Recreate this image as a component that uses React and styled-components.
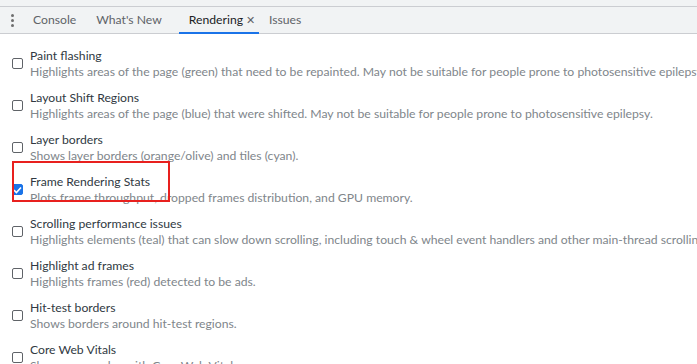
import React from "react";
import styled, { createGlobalStyle } from "styled-components";

const Global = createGlobalStyle`
  html, body { margin: 0; padding: 0; background: #fff; }
  body { font-family: Lato, "Segoe UI", sans-serif; font-size: 12.2px; color: #202124; }
`;

const Page = styled.div`
  width: 697px;
  height: 364px;
  overflow: hidden;
  display: flex;
  flex-direction: column;
`;

const TopStrip = styled.div`
  flex: none;
  height: 6px;
  background: #f1f3f4;
  border-bottom: 1px solid #cbcdd1;
`;

const TabBar = styled.div`
  flex: none;
  height: 26px;
  background: #f1f3f4;
  border-bottom: 1px solid #cbcdd1;
  display: flex;
  align-items: stretch;
  padding-left: 11px;
`;

const MenuDots = styled.div`
  width: 3px;
  display: flex;
  flex-direction: column;
  justify-content: center;
  align-items: center;
  gap: 2px;
  margin-right: 9px;
  span {
    width: 3px;
    height: 3px;
    border-radius: 50%;
    background: #6e6e6e;
  }
`;

const Tab = styled.div`
  display: flex;
  align-items: center;
  gap: 3px;
  padding: ${(p) => (p.$active ? "0 4px 0 10px" : "0 10px")};
  margin-left: ${(p) => (p.$active ? "7px" : "0")};
  color: ${(p) => (p.$active ? "#202124" : "#5f6368")};
  border-bottom: 2px solid ${(p) => (p.$active ? "#1a73e8" : "transparent")};
  margin-bottom: -1px;
  white-space: nowrap;
`;

const Close = styled.span`
  font-size: 11px;
  color: #5f6368;
  line-height: 1;
`;

const List = styled.div`
  display: flex;
  flex-direction: column;
  gap: 10px;
  padding: 14px 0 0 12px;
`;

const Item = styled.div`
  position: relative;
  display: flex;
  align-items: flex-start;
  gap: 7px;
  white-space: nowrap;
`;

const Box = styled.span`
  flex: none;
  box-sizing: border-box;
  width: 11px;
  height: 11px;
  margin-top: 10px;
  border: 1px solid ${(p) => (p.$checked ? "#1a73e8" : "#5f6368")};
  border-radius: 2px;
  background: ${(p) => (p.$checked ? "#1a73e8" : "#fff")};
  display: flex;
  align-items: center;
  justify-content: center;
`;

const Texts = styled.div`
  display: flex;
  flex-direction: column;
`;

const Title = styled.div`
  line-height: 16px;
  color: #303942;
`;

const Desc = styled.div`
  line-height: 16px;
  color: #80868b;
`;

const Highlight = styled.div`
  position: absolute;
  left: 0;
  top: -13px;
  box-sizing: border-box;
  width: 158px;
  height: 41px;
  border: 2px solid #e8201e;
  pointer-events: none;
`;

const items = [
  ["Paint flashing", "Highlights areas of the page (green) that need to be repainted. May not be suitable for people prone to photosensitive epilepsy."],
  ["Layout Shift Regions", "Highlights areas of the page (blue) that were shifted. May not be suitable for people prone to photosensitive epilepsy."],
  ["Layer borders", "Shows layer borders (orange/olive) and tiles (cyan)."],
  ["Frame Rendering Stats", "Plots frame throughput, dropped frames distribution, and GPU memory.", true],
  ["Scrolling performance issues", "Highlights elements (teal) that can slow down scrolling, including touch & wheel event handlers and other main-thread scrolling situations."],
  ["Highlight ad frames", "Highlights frames (red) detected to be ads."],
  ["Hit-test borders", "Shows borders around hit-test regions."],
  ["Core Web Vitals", "Shows an overlay with Core Web Vitals."],
];

export default function App() {
  return (
    <Page>
      <Global />
      <TopStrip />
      <TabBar>
        <MenuDots>
          <span />
          <span />
          <span />
        </MenuDots>
        <Tab>Console</Tab>
        <Tab>What's New</Tab>
        <Tab $active>
          Rendering <Close>✕</Close>
        </Tab>
        <Tab>Issues</Tab>
      </TabBar>
      <List>
        {items.map(([title, desc, checked]) => (
          <Item key={title}>
            <Box $checked={checked}>
              {checked && (
                <svg width="9" height="8" viewBox="0 0 9 8">
                  <path d="M1 4.2 L3.4 6.5 L8 1.5" stroke="#fff" strokeWidth="1.6" fill="none" />
                </svg>
              )}
            </Box>
            <Texts>
              <Title>{title}</Title>
              <Desc>{desc}</Desc>
            </Texts>
            {checked && <Highlight />}
          </Item>
        ))}
      </List>
    </Page>
  );
}
